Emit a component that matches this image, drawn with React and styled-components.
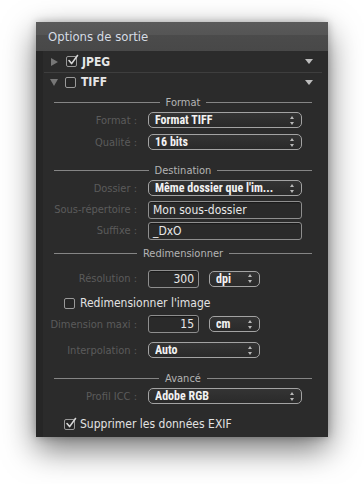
import React from 'react';
import styled, { createGlobalStyle } from 'styled-components';

const GlobalStyle = createGlobalStyle`
    html, body {
        margin: 0;
        padding: 0;
        background: #ffffff;
    }
    body {
        font-family: "DejaVu Sans Condensed", "DejaVu Sans", "Liberation Sans", sans-serif;
        font-stretch: condensed;
        -webkit-font-smoothing: antialiased;
    }
`;

const Page = styled.div`
    width: 364px;
    height: 484px;
    padding: 22px 0 0 36px;
    box-sizing: border-box;
`;

const Panel = styled.div`
    width: 292px;
    background: #2b2b2b;
    box-shadow: 0 12px 30px rgba(0, 0, 0, 0.55), 0 0 8px rgba(0, 0, 0, 0.25);
    display: flex;
    flex-direction: column;
`;

const Header = styled.div`
    height: 29px;
    display: flex;
    align-items: center;
    padding-left: 12px;
    background: linear-gradient(to bottom, #5a5a5a 0%, #555 44%, #4b4b4b 46%, #484848 100%);
    color: #d5dce4;
    font-size: 13px;
`;

const Body = styled.div`
    display: flex;
    flex-direction: column;
    padding: 0 6px 2px 8px;
    background: linear-gradient(to right, #262626 0, #262626 7px, #2b2b2b 7px);
`;

const ItemRow = styled.div`
    height: ${p => p.$h}px;
    display: flex;
    align-items: center;
    border-bottom: ${p => (p.$line ? '1px solid #3e3e3e' : 'none')};
    color: #e6e6e6;
    font-size: 12px;
    font-weight: bold;
`;

const Disclosure = styled.span`
    width: 0;
    height: 0;
    margin: 0 ${p => (p.$open ? 7 : 8)}px 0 ${p => (p.$open ? 6 : 7)}px;
    border-style: solid;
    ${p => p.$open
        ? 'border-width: 7px 4px 0 4px; border-color: #777 transparent transparent transparent;'
        : 'border-width: 4px 0 4px 7px; border-color: transparent transparent transparent #777;'}
`;

const Box = styled.span`
    width: 9px;
    height: 9px;
    border: 1px solid #9a9a9a;
    border-radius: 2px;
    background: #262626;
    position: relative;
    flex: none;
    margin-right: ${p => p.$mr}px;
`;

const Tick = styled.svg`
    position: absolute;
    left: 0;
    top: -3px;
`;

const ItemName = styled.span`
    flex: 1;
`;

const Chevron = styled.span`
    width: 0;
    height: 0;
    border-style: solid;
    border-width: 5px 4px 0 4px;
    border-color: #bdbdbd transparent transparent transparent;
    margin-right: 9px;
`;

const SectionTitle = styled.div`
    height: 14px;
    margin: ${p => p.$mt}px 10px 0 10px;
    display: flex;
    align-items: center;
    gap: 6px;
    color: #b4b4b4;
    font-size: 11px;

    &::before, &::after {
        content: '';
        flex: 1;
        height: 1px;
        background: #858585;
    }
`;

const Field = styled.div`
    height: ${p => p.$h || 22}px;
    margin-top: ${p => p.$mt || 0}px;
    display: grid;
    grid-template-columns: 93px 1fr;
    column-gap: 11px;
    align-items: center;
    padding-right: 20px;
`;

const Label = styled.span`
    text-align: right;
    color: #5b5b5b;
    font-size: 11px;
    white-space: nowrap;
`;

const Controls = styled.div`
    display: flex;
    align-items: center;
    gap: 10px;
`;

const SelectBox = styled.div`
    width: ${p => (p.$w ? `${p.$w}px` : '100%')};
    height: 16px;
    box-sizing: border-box;
    border: 1px solid #a3a3a3;
    border-radius: 5px;
    background: linear-gradient(to bottom, #343434, #2a2a2a);
    display: flex;
    align-items: center;
    padding: 0 7px 0 6px;
    color: #f2f2f2;
    font-family: Roboto, "Liberation Sans", sans-serif;
    font-size: 12px;
    font-weight: bold;
    white-space: nowrap;
`;

const SelectText = styled.span`
    flex: 1;
    overflow: hidden;
`;

const Steppers = styled.span`
    display: flex;
    flex-direction: column;
    gap: 3px;

    &::before, &::after {
        content: '';
        width: 0;
        height: 0;
        border-style: solid;
        border-width: 0 2.5px 3px 2.5px;
        border-color: transparent transparent #b8b8b8 transparent;
    }
    &::after {
        border-width: 3px 2.5px 0 2.5px;
        border-color: #b8b8b8 transparent transparent transparent;
    }
`;

const TextBox = styled.div`
    width: ${p => (p.$w ? `${p.$w}px` : '100%')};
    height: 18px;
    box-sizing: border-box;
    border: 1px solid #8e8e8e;
    border-radius: 3px;
    background: #2a2a2a;
    box-shadow: inset 0 1px 1px rgba(0, 0, 0, 0.4);
    display: flex;
    align-items: center;
    justify-content: ${p => (p.$right ? 'flex-end' : 'flex-start')};
    padding: 0 4px 0 4px;
    color: #e8e8e8;
    font-size: 12px;
    white-space: nowrap;
`;

const CheckRow = styled.div`
    height: ${p => p.$h}px;
    margin-top: ${p => p.$mt}px;
    display: flex;
    align-items: center;
    padding-left: 20px;
    color: #e2e2e2;
    font-size: 12px;
`;

const Check = ({ on, mr }) => (
    <Box $mr={mr}>
        {on && (
            <Tick width="12" height="12" viewBox="0 0 12 12">
                <path d="M2 6.5 L4.6 9.6 L10.5 1.5" fill="none" stroke="#d8d8d8" strokeWidth="1.6" strokeLinecap="round" strokeLinejoin="round" />
            </Tick>
        )}
    </Box>
);

const Select = ({ children, w }) => (
    <SelectBox $w={w}>
        <SelectText>{children}</SelectText>
        <Steppers />
    </SelectBox>
);

const App = () => (
    <>
        <GlobalStyle />
        <Page>
            <Panel>
                <Header>Options de sortie</Header>
                <Body>
                    <ItemRow $h={21} $line>
                        <Disclosure />
                        <Check on mr={5} />
                        <ItemName>JPEG</ItemName>
                        <Chevron />
                    </ItemRow>
                    <ItemRow $h={18}>
                        <Disclosure $open />
                        <Check mr={5} />
                        <ItemName>TIFF</ItemName>
                        <Chevron />
                    </ItemRow>

                    <SectionTitle $mt={4}>Format</SectionTitle>
                    <Field>
                        <Label>Format :</Label>
                        <Select>Format TIFF</Select>
                    </Field>
                    <Field>
                        <Label>Qualité :</Label>
                        <Select>16 bits</Select>
                    </Field>

                    <SectionTitle $mt={10}>Destination</SectionTitle>
                    <Field>
                        <Label>Dossier :</Label>
                        <Select>Même dossier que l'im...</Select>
                    </Field>
                    <Field $h={21}>
                        <Label>Sous-répertoire :</Label>
                        <TextBox>Mon sous-dossier</TextBox>
                    </Field>
                    <Field $h={21}>
                        <Label>Suffixe :</Label>
                        <TextBox>_DxO</TextBox>
                    </Field>

                    <SectionTitle $mt={5}>Redimensionner</SectionTitle>
                    <Field $h={21} $mt={8}>
                        <Label>Résolution :</Label>
                        <Controls>
                            <TextBox $w={51} $right>300</TextBox>
                            <Select w={51}>dpi</Select>
                        </Controls>
                    </Field>
                    <CheckRow $h={24} $mt={2}>
                        <Check mr={5} />
                        Redimensionner l'image
                    </CheckRow>
                    <Field $h={18}>
                        <Label>Dimension maxi :</Label>
                        <Controls>
                            <TextBox $w={51} $right>15</TextBox>
                            <Select w={51}>cm</Select>
                        </Controls>
                    </Field>
                    <Field $mt={6}>
                        <Label>Interpolation :</Label>
                        <Select w={112}>Auto</Select>
                    </Field>

                    <SectionTitle $mt={10}>Avancé</SectionTitle>
                    <Field>
                        <Label>Profil ICC :</Label>
                        <Select>Adobe RGB</Select>
                    </Field>
                    <CheckRow $h={22} $mt={6}>
                        <Check on mr={5} />
                        Supprimer les données EXIF
                    </CheckRow>
                </Body>
            </Panel>
        </Page>
    </>
);

export default App;
